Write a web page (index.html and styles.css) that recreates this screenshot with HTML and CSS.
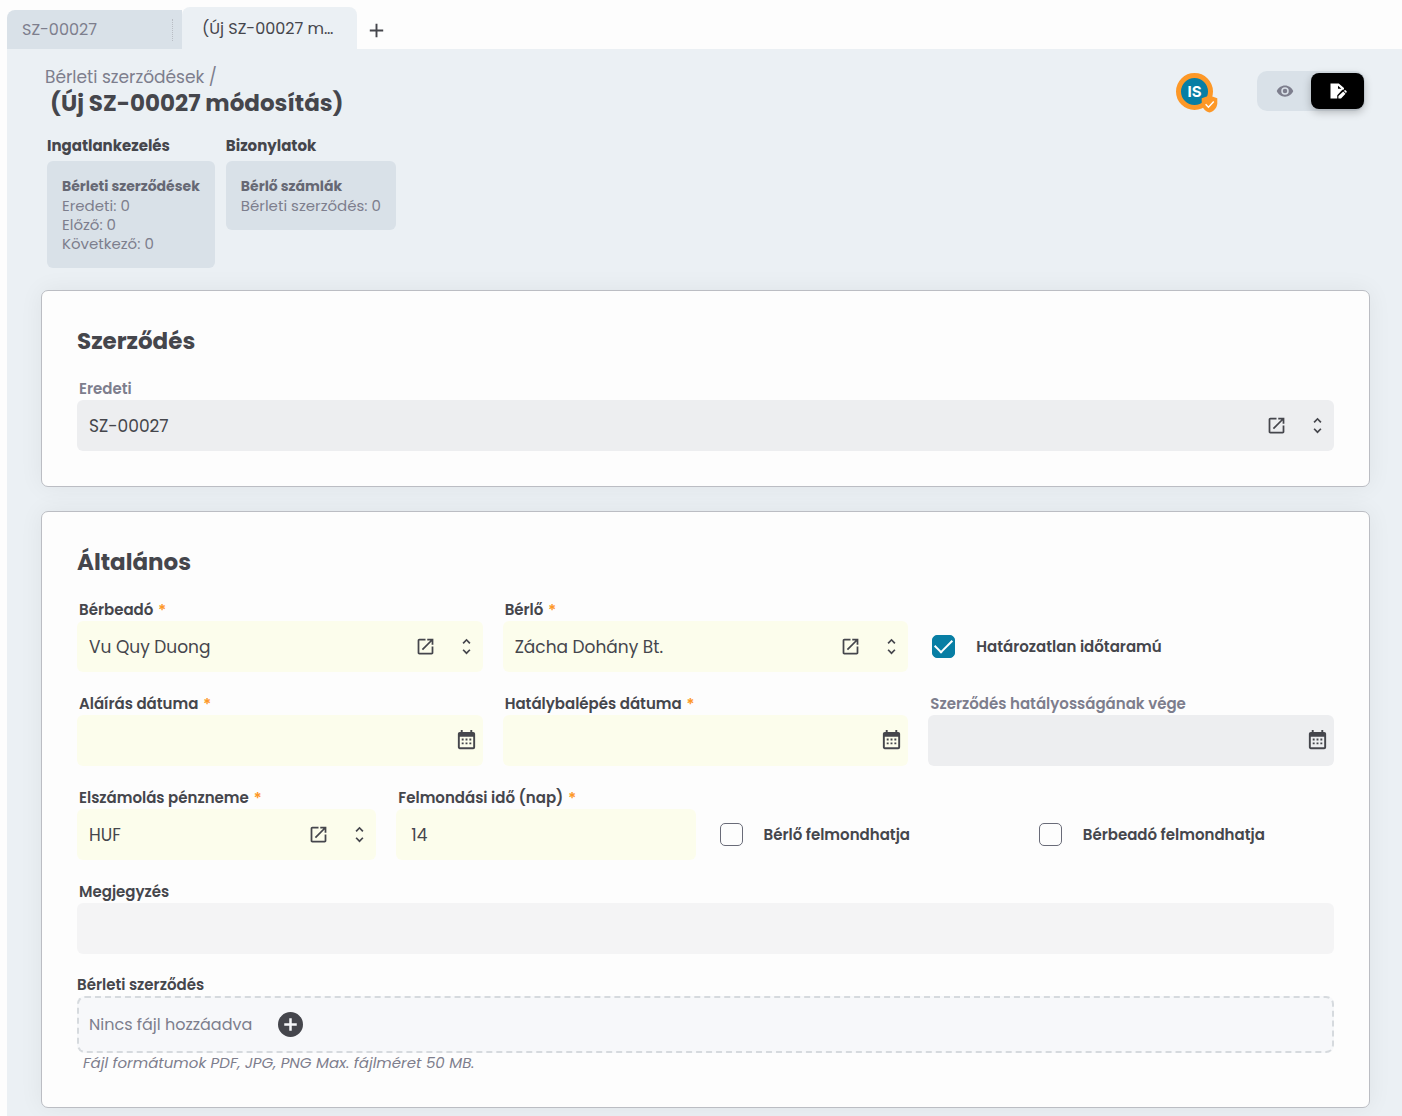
FILE: index.html
```html
<!DOCTYPE html>
<html lang="hu">
<head>
<meta charset="utf-8">
<meta name="viewport" content="width=device-width, initial-scale=1">
<title>(Új SZ-00027 módosítás)</title>
<link rel="stylesheet" href="styles.css">
</head>
<body>
<svg class="sprite" aria-hidden="true">
  <symbol id="open" viewBox="0 0 24 24"><path d="M19 19H5V5h7V3H5c-1.11 0-2 .9-2 2v14c0 1.1.89 2 2 2h14c1.1 0 2-.9 2-2v-7h-2v7zM14 3v2h3.59l-9.83 9.83 1.41 1.41L19 6.41V10h2V3h-7z"/></symbol>
  <symbol id="unfold" viewBox="0 0 24 24"><path d="M12 18.17L8.83 15l-1.41 1.41L12 21l4.59-4.59L15.17 15M12 5.83L15.17 9l1.41-1.41L12 3 7.41 7.59 8.83 9 12 5.83z"/></symbol>
  <symbol id="calendar" viewBox="0 0 24 24"><path d="M9 10v2H7v-2h2m4 0v2h-2v-2h2m4 0v2h-2v-2h2m2-7a2 2 0 0 1 2 2v14a2 2 0 0 1-2 2H5c-1.11 0-2-.9-2-2V5a2 2 0 0 1 2-2h1V1h2v2h8V1h2v2h1m0 16V8H5v11h14M9 14v2H7v-2h2m4 0v2h-2v-2h2m4 0v2h-2v-2h2z"/></symbol>
</svg>

<nav class="tabs" aria-label="Lapok">
  <a class="tab" href="#sz">SZ-00027</a>
  <a class="tab tab-active" href="#uj" aria-current="page"><span>(Új SZ-00027 m…</span></a>
  <button class="tab-add" type="button" aria-label="Új lap">
    <svg viewBox="0 0 24 24"><path d="M19 13h-6v6h-2v-6H5v-2h6V5h2v6h6v2z"/></svg>
  </button>
</nav>

<main class="page">
  <header class="head">
    <div>
      <a class="crumb" href="#lista">Bérleti szerződések /</a>
      <h1>(Új SZ-00027 módosítás)</h1>
    </div>
    <div class="tools">
      <div class="avatar">IS
        <svg class="badge" viewBox="0 0 24 24"><path class="shield" d="M12 0L1 4v7c0 6 4.700 11.600 11 13 6.300-1.400 11-7 11-13V4z"/><path class="tick" d="M6.500 12.500l4 4 7.500-8"/></svg>
      </div>
      <div class="modes">
        <button type="button" aria-label="Megtekintés"><svg viewBox="0 0 24 24"><path d="M12 9a3 3 0 0 0-3 3 3 3 0 0 0 3 3 3 3 0 0 0 3-3 3 3 0 0 0-3-3m0 8a5 5 0 0 1-5-5 5 5 0 0 1 5-5 5 5 0 0 1 5 5 5 5 0 0 1-5 5m0-12.500C7 4.500 2.730 7.610 1 12c1.730 4.390 6 7.500 11 7.500s9.270-3.110 11-7.500c-1.730-4.390-6-7.500-11-7.500z"/></svg></button>
        <button class="on" type="button" aria-label="Szerkesztés"><svg viewBox="0 0 24 24"><path d="M2 2h11l7 6v2c-1.500 0-2.500.5-3.500 1.500L11 17.500V22H2V2zm10 3v4h4.500L12 5z" fill-rule="evenodd"/><path d="M12.500 18.500V22H16l6-6.500-3-3-6.500 6zM22.500 14.500l1-1c.3-.3.300-.8 0-1.100L22 10.900c-.3-.3-.8-.3-1.100 0l-1 1 2.600 2.600z"/></svg></button>
      </div>
    </div>
  </header>

  <div class="related">
    <section>
      <h2>Ingatlankezelés</h2>
      <div class="rel-box">
        <h3>Bérleti szerződések</h3>
        <p>Eredeti: 0</p><p>Előző: 0</p><p>Következő: 0</p>
      </div>
    </section>
    <section>
      <h2>Bizonylatok</h2>
      <div class="rel-box">
        <h3>Bérlő számlák</h3>
        <p>Bérleti szerződés: 0</p>
      </div>
    </section>
  </div>

  <form class="cards">
    <section class="card">
      <h2>Szerződés</h2>
      <div class="item">
        <label class="muted" for="eredeti">Eredeti</label>
        <div class="field off">
          <select id="eredeti" disabled><option>SZ-00027</option></select>
          <a href="#sz" aria-label="Megnyitás"><svg><use href="#open"/></svg></a>
          <svg><use href="#unfold"/></svg>
        </div>
      </div>
    </section>

    <section class="card">
      <h2>Általános</h2>
      <div class="rows">
        <div class="row three">
          <div class="item">
            <label for="berbeado">Bérbeadó <b>*</b></label>
            <div class="field must">
              <select id="berbeado"><option>Vu Quy Duong</option></select>
              <a href="#berbeado" aria-label="Megnyitás"><svg><use href="#open"/></svg></a>
              <svg><use href="#unfold"/></svg>
            </div>
          </div>
          <div class="item">
            <label for="berlo">Bérlő <b>*</b></label>
            <div class="field must">
              <select id="berlo"><option>Zácha Dohány Bt.</option></select>
              <a href="#berlo" aria-label="Megnyitás"><svg><use href="#open"/></svg></a>
              <svg><use href="#unfold"/></svg>
            </div>
          </div>
          <label class="check"><input type="checkbox" checked>Határozatlan időtaramú</label>
        </div>

        <div class="row three">
          <div class="item">
            <label for="alairas">Aláírás dátuma <b>*</b></label>
            <div class="field must">
              <input id="alairas" type="text">
              <button class="cal" type="button" aria-label="Naptár"><svg><use href="#calendar"/></svg></button>
            </div>
          </div>
          <div class="item">
            <label for="hataly">Hatálybalépés dátuma <b>*</b></label>
            <div class="field must">
              <input id="hataly" type="text">
              <button class="cal" type="button" aria-label="Naptár"><svg><use href="#calendar"/></svg></button>
            </div>
          </div>
          <div class="item">
            <label class="muted" for="vege">Szerződés hatályosságának vége</label>
            <div class="field off">
              <input id="vege" type="text" disabled>
              <button class="cal" type="button" aria-label="Naptár"><svg><use href="#calendar"/></svg></button>
            </div>
          </div>
        </div>

        <div class="row four">
          <div class="item">
            <label for="penznem">Elszámolás pénzneme <b>*</b></label>
            <div class="field must">
              <select id="penznem"><option>HUF</option></select>
              <a href="#penznem" aria-label="Megnyitás"><svg><use href="#open"/></svg></a>
              <svg><use href="#unfold"/></svg>
            </div>
          </div>
          <div class="item">
            <label for="nap">Felmondási idő (nap) <b>*</b></label>
            <div class="field must number">
              <input id="nap" type="text" inputmode="numeric" value="14">
            </div>
          </div>
          <label class="check"><input type="checkbox">Bérlő felmondhatja</label>
          <label class="check"><input type="checkbox">Bérbeadó felmondhatja</label>
        </div>

        <div class="item">
          <label for="megj">Megjegyzés</label>
          <div class="field plain"><input id="megj" type="text"></div>
        </div>

        <div class="files">
          <h3>Bérleti szerződés</h3>
          <div class="drop">
            <span>Nincs fájl hozzáadva</span>
            <button type="button" aria-label="Fájl hozzáadása"><svg viewBox="2 2 20 20"><path d="M17 13h-4v4h-2v-4H7v-2h4V7h2v4h4m-5-9A10 10 0 0 0 2 12a10 10 0 0 0 10 10 10 10 0 0 0 10-10A10 10 0 0 0 12 2z"/></svg></button>
          </div>
          <p>Fájl formátumok PDF, JPG, PNG Max. fájlméret 50 MB.</p>
        </div>
      </div>
    </section>
  </form>
</main>
</body>
</html>
```
FILE: styles.css
```css
:root {
  --ink: #45464c;
  --muted: #7d7e8d;
  --orange: #fd9827;
  --teal: #087ea4;
  --page: #ebf0f4;
  --tile: #d9e1e8;
  --paper: #fdfdfd;
}

* { box-sizing: border-box; }

body {
  margin: 0;
  background: var(--paper);
  color: var(--ink);
  font: 16px/24px Poppins, Inter, "Open Sans", sans-serif;
}

h1, h2, h3, p { margin: 0; }
a { color: inherit; text-decoration: none; }
button { padding: 0; border: 0; background: none; color: inherit; font: inherit; cursor: pointer; }
svg { display: block; fill: currentColor; }
.sprite { position: absolute; width: 0; height: 0; }

/* Tabs */
.tabs { display: flex; align-items: flex-end; padding: 7px 0 0 7px; }
.tab {
  display: flex;
  align-items: center;
  width: 175px;
  height: 39px;
  padding: 0 9px 0 15px;
  border-radius: 8px 0 0 0;
  background: var(--tile);
  color: var(--muted);
}
.tab::after { content: ""; height: 22px; margin-left: auto; border-right: 1px dotted #b9bdc4; }
.tab-active {
  height: 42px;
  padding: 2px 20px 0;
  border-radius: 8px 8px 0 0;
  background: var(--page);
  color: var(--ink);
}
.tab-active::after { content: none; }
.tab-active span { white-space: nowrap; }
.tab-add { height: 37px; margin-left: 8px; }
.tab-add svg { width: 23px; height: 23px; }

/* Page head */
.page {
  min-height: calc(100vh - 49px);
  margin-left: 7px;
  padding: 17px 32px 8px 34px;
  background: var(--page);
}
.head { display: flex; justify-content: space-between; align-items: flex-start; padding: 0 5px 0 4px; }
.crumb { display: block; color: var(--muted); font-size: 17px; line-height: 23px; }
h1 { padding-left: 5px; font-size: 23px; line-height: 28px; font-weight: 700; }
.tools { display: flex; gap: 44px; padding-top: 5px; }
.avatar {
  position: relative;
  width: 37px;
  height: 37px;
  margin-top: 2px;
  border: 5px solid var(--orange);
  border-radius: 50%;
  background: var(--teal);
  color: #fff;
  font: 700 15px/27px Inter, sans-serif;
  text-align: center;
}
.badge { position: absolute; right: -10px; bottom: -8px; width: 17px; height: 18px; }
.shield { fill: var(--orange); }
.tick { fill: none; stroke: #fff; stroke-width: 2; }
.modes { display: flex; padding: 2px 1px; border-radius: 10px; background: var(--tile); color: var(--muted); }
.modes button { display: grid; place-items: center; width: 53px; height: 36px; border-radius: 8px; }
.modes svg { width: 18px; height: 18px; }
.modes .on { background: #000; color: #fff; box-shadow: 0 3px 8px rgba(0, 0, 0, .25); }

.related { display: flex; align-items: flex-start; gap: 11px; padding: 18px 6px 22px; }
.related h2 { font-size: 15px; line-height: 22px; font-weight: 700; }
.rel-box { margin-top: 4px; padding: 15px; border-radius: 6px; background: var(--tile); color: var(--muted); }
.rel-box h3 { color: #666874; font-size: 14px; line-height: 20px; font-weight: 700; }
.rel-box p { font-size: 15px; line-height: 19px; }

/* Cards */
.cards { display: grid; gap: 24px; }
.card {
  padding: 32px 35px 35px;
  border: 1px solid #bbbdc3;
  border-radius: 7px;
  background: var(--paper);
  box-shadow: 0 0 24px rgba(0, 0, 0, .06);
}
.card h2 { margin-bottom: 18px; font-size: 23px; line-height: 36px; font-weight: 700; }
.rows { display: grid; gap: 20px; }
.row { display: grid; align-items: end; gap: 20px; }
.three { grid-template-columns: repeat(3, minmax(0, 1fr)); }
.four { grid-template-columns: repeat(4, minmax(0, 1fr)); }

.item label, .files h3, .check { font-size: 15px; font-weight: 600; line-height: 23px; }
.item label { display: block; padding-left: 2px; }
.item b { margin-left: 1px; color: var(--orange); font-family: Inter, sans-serif; font-weight: 700; }
.item .muted { color: var(--muted); }

.field { display: flex; align-items: center; gap: 18px; height: 51px; padding: 0 5px 0 12px; border-radius: 6px; }
.must { background: #fcfdec; }
.off { background: #edeef0; }
.plain { background: #f4f4f5; }
.number { padding-left: 15px; }
.field input, .field select {
  flex: 1;
  min-width: 0;
  height: 100%;
  padding: 0;
  border: 0;
  outline: 0;
  appearance: none;
  background: none;
  color: var(--ink);
  font: inherit;
  font-size: 17px;
  opacity: 1;
}
.field svg { width: 23px; height: 21px; }
.field .cal svg { height: 23px; }

.check { display: flex; align-items: center; gap: 21px; height: 51px; padding-left: 4px; }
.check input {
  flex: none;
  display: grid;
  place-items: center;
  width: 23px;
  height: 23px;
  margin: 0;
  border: 1px solid #696b78;
  border-radius: 5px;
  appearance: none;
}
.check input:checked { border-color: var(--teal); background: var(--teal); }
.check input:checked::before {
  content: "";
  width: 15px;
  height: 8px;
  margin-top: -5px;
  border: solid #fff;
  border-width: 0 0 2px 2px;
  transform: rotate(-45deg);
}

/* File upload */
.files h3 { line-height: 22px; }
.drop {
  display: flex;
  align-items: center;
  gap: 26px;
  height: 57px;
  padding: 0 10px;
  border: 2px dashed #d6dade;
  border-radius: 8px;
  background: #f7f8fa;
  color: var(--muted);
}
.drop button { color: var(--ink); }
.drop svg { width: 25px; height: 25px; }
.files p { padding-left: 6px; color: var(--muted); font-size: 15px; line-height: 19px; font-style: italic; }
```
